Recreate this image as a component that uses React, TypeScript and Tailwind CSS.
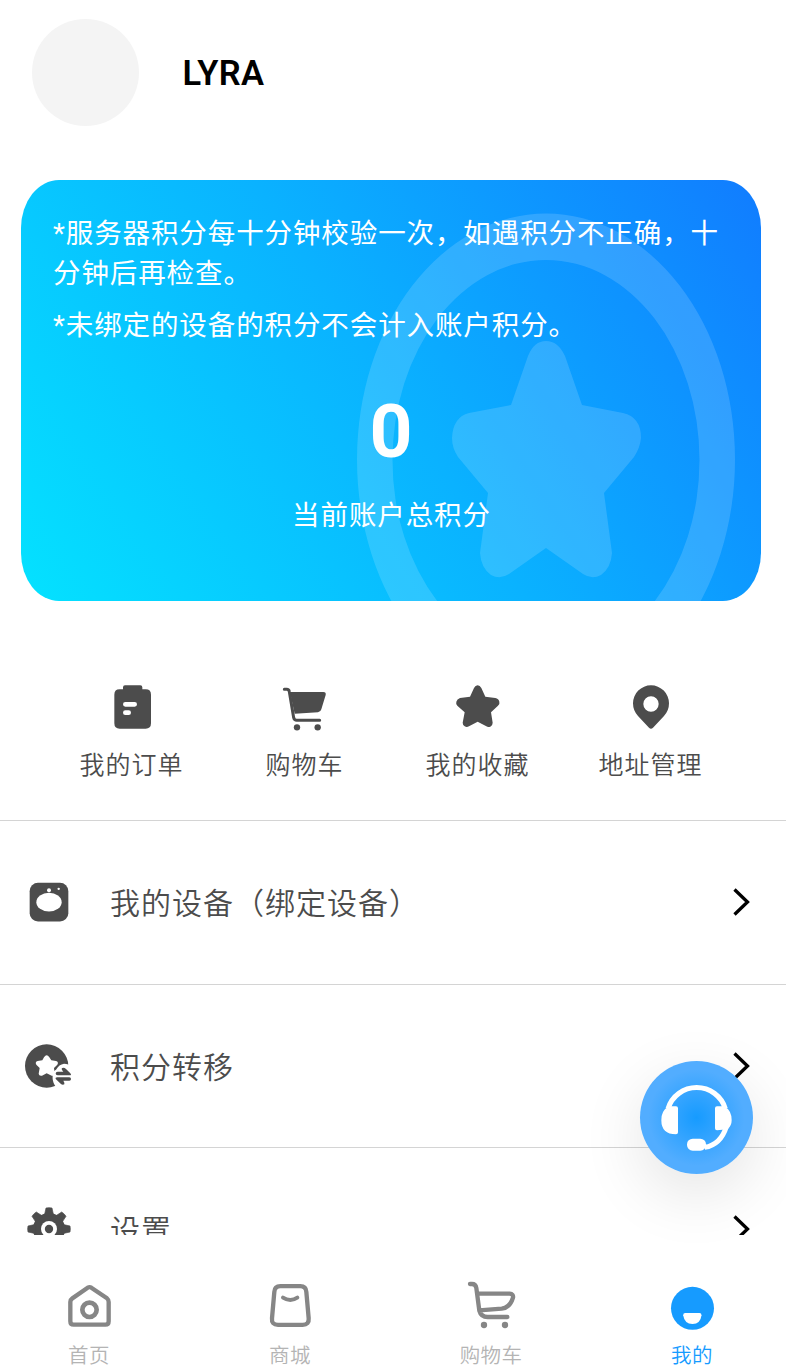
import type { ReactNode } from 'react';
import clsx from 'clsx';

type IconProps = { box: string; className?: string; children: ReactNode };

function Icon({ box, className, children }: IconProps) {
    return (
        <svg viewBox={box} className={clsx("shrink-0", className)} fill="currentColor" strokeLinecap="round" strokeLinejoin="round">
            {children}
        </svg>
    );
}

const shortcuts = [
    {
        label: '我的订单',
        box: '147 42 135 141',
        icon: (
            <>
                <path d="M189 58V52q0-6 6-6h46q6 0 6 6v6h10q16 0 16 16v86q0 16-16 16h-78q-16 0-16-16V74q0-16 16-16z" />
                <path d="M196 103h28M196 128h10" stroke="#fff" strokeWidth="14" />
            </>
        ),
    },
    {
        label: '购物车',
        box: '666 42 135 141',
        icon: (
            <>
                <path d="M690 66h100q9 0 7 9l-13 43q-2 8-10 9l-70 4z" />
                <path d="M673 58h7q7 0 8 7l13 78q2 8 9 8h69" fill="none" stroke="currentColor" strokeWidth="9" />
                <circle cx="711" cy="172" r="9.5" />
                <circle cx="773" cy="172" r="9.5" />
            </>
        ),
    },
    {
        label: '我的收藏',
        box: '165 42 135 141',
        icon: <path d="M222 54Q226 46 233 46T244 54L256 80 286 84Q296 86 298 95T294 107L273 127 278 158Q278 167 271 170T259 169L233 155 207 169Q200 173 194 169T188 158L194 127 172 107Q167 102 169 95T180 84L210 80Z" />,
    },
    {
        label: '地址管理',
        box: '684 42 135 141',
        icon: <path fillRule="evenodd" d="M753 46a54 54 0 0 1 54 54q0 22-15 38l-33 35q-6 6-12 0l-33-35q-15-16-15-38a54 54 0 0 1 54-54zM753 79a23 23 0 1 0 0 46a23 23 0 1 0 0-46z" />,
    },
];

const rows = [
    {
        label: '我的设备（绑定设备）',
        box: '42 55.5 144 144',
        icon: (
            <>
                <rect x="59" y="70" width="116" height="116" rx="25" />
                <g fill="#fff">
                    <ellipse cx="117" cy="128" rx="38" ry="28" />
                    <circle cx="117" cy="92" r="6" />
                    <circle cx="146" cy="88" r="3.5" />
                </g>
            </>
        ),
    },
    {
        label: '积分转移',
        box: '42 36 144 144',
        icon: (
            <>
                <circle cx="110" cy="108" r="65" />
                <path fill="#fff" d="M102 82Q110 70 118 82L124 91 138 93Q147 96 142 104L132 114 134 131Q133 139 125 137L110 130 96 137Q87 139 86 131L89 114 79 104Q74 96 83 93L97 91Z" />
                <path fill="#fff" d="M128 140Q125 126 138 119Q147 103 162 101Q179 101 190 116V174H140Q126 157 128 140Z" />
                <path d="M143 125h17l-4-5q-3-7 4-7 4 0 8 4l13 13q5 6-2 6h-36q-6 0-6-5.500t6-5.500zM142 142h36q5 0 5 5t-5 5h-18l3 6q2 6-4 6-4 0-7-3l-14-13q-4-6 4-6z" />
            </>
        ),
    },
    {
        label: '设置',
        box: '42 525 144 144',
        icon: (
            <>
                <circle cx="117" cy="597" r="48" />
                {[0, 45, 90, 135, 180, 225, 270, 315].map(angle => (
                    <path key={angle} d="M103 557L108 534Q117 532 126 534L131 557Z" stroke="currentColor" strokeWidth="2" transform={`rotate(${angle} 117 597)`} />
                ))}
                <circle cx="117" cy="597" r="24" fill="#fff" />
                <circle cx="117" cy="597" r="12.5" />
            </>
        ),
    },
];

const tabs = [
    {
        label: '首页',
        box: '75 48 147 147',
        icon: (
            <g fill="none" stroke="currentColor" strokeWidth="13">
                <path d="M91 111Q91 104 97 100L143 68Q149 65 154 68L201 100Q206 104 206 111V169Q206 179 196 179H101Q91 179 91 169Z" />
                <circle cx="148.500" cy="134.500" r="21.500" strokeWidth="14" />
            </g>
        ),
    },
    {
        label: '商城',
        box: '677 48 147 147',
        icon: (
            <g fill="none" stroke="currentColor" strokeWidth="13">
                <path d="M720 63.500h60q17 0 18 17l7 79q2 20-18 20h-74q-20 0-18-20l7-79q1-17 18-17z" />
                <path d="M728 98q22 14 43 0" strokeWidth="12" />
            </g>
        ),
    },
    {
        label: '购物车',
        box: '81 48 147 147',
        icon: (
            <>
                <path d="M90 57h6q11 0 13 12l9 68q5 19 25 19h59M112 86h97q12 1 10 12-9 30-34 33l-67 5" fill="none" stroke="currentColor" strokeWidth="13" />
                <circle cx="132" cy="180" r="9.500" />
                <circle cx="195" cy="180" r="9.500" />
            </>
        ),
    },
    {
        label: '我的',
        box: '684.500 48 147 147',
        active: true,
        icon: (
            <>
                <circle cx="758" cy="130" r="64.500" />
                <path fill="#fff" d="M736 144h43q6 0 6 7-3 26-27 26t-28-26q0-7 6-7z" />
            </>
        ),
    },
];

function PointsCard() {
    return (
        <section className="relative ml-[21px] mt-[54px] h-[421px] w-[740px] overflow-hidden rounded-[38px/48px] bg-[linear-gradient(57deg,#04e2ff_0%,#0ab2ff_50%,#117cff_100%)] text-white">
            <svg viewBox="21 180 740 421" className="absolute inset-0 h-full w-full" fill="#fff" fillOpacity="0.150">
                <path fillRule="evenodd" d="M546 213.500a189 246 0 1 0 0 492a189 246 0 1 0 0-492zM546 260a153.500 200 0 1 1 0 400a153.500 200 0 1 1 0-400z" />
                <path d="M528 356Q534 341 546 341T565 356L582 405 623 413Q641 417 641 438 640 448 634 457L604 493 612 553Q611 568 601 575 592 580 583 574L546 548 509 574Q500 580 491 575 481 568 480 553L488 493 458 457Q452 448 452 438 453 417 469 413L511 405Z" />
            </svg>
            <div className="relative flex flex-col gap-3 pl-8 pr-7 pt-[34px] text-[27.500px] leading-10 tracking-[0.900px]">
                <p>*服务器积分每十分钟校验一次，如遇积分不正确，十分钟后再检查。</p>
                <p>*未绑定的设备的积分不会计入账户积分。</p>
            </div>
            <div className="relative flex flex-col items-center">
                <strong className="mt-[45px] font-['Roboto'] text-[75px] font-bold leading-[80px]">0</strong>
                <span className="ml-px mt-[25px] text-[27.500px] leading-10 tracking-[0.900px]">当前账户总积分</span>
            </div>
        </section>
    );
}

export default function App() {
    return (
        <div className="relative flex h-[1365px] w-[786px] flex-col overflow-hidden bg-white font-['Roboto','Noto_Sans_CJK_SC',sans-serif] text-[#4c4c4c]">
            <main className="h-[1235px] shrink-0 overflow-hidden">
                <header className="flex items-center gap-[43.500px] pl-8 pt-[19px]">
                    <div className="size-[107px] rounded-full bg-[#f4f4f4]" />
                    <h1 className="text-[34.500px] font-semibold leading-10 tracking-[0.400px] text-black">LYRA</h1>
                </header>

                <PointsCard />

                <nav className="ml-[45px] mt-[83px] grid h-[136px] w-[692px] grid-cols-4">
                    {shortcuts.map(item => (
                        <a key={item.label} className="flex flex-col items-center">
                            <Icon box={item.box} className="h-[47px] w-[45px]">{item.icon}</Icon>
                            <span className="mt-[15px] text-[25px] font-[350] leading-10 tracking-[1px]">{item.label}</span>
                        </a>
                    ))}
                </nav>

                <ul>
                    {rows.map(row => (
                        <li key={row.label} className="flex h-[163.500px] items-center border-t border-[#d4d4d4] pl-6 pr-[36px]">
                            <Icon box={row.box} className="size-12">{row.icon}</Icon>
                            <span className="ml-[38px] mt-1 flex-1 text-[30px] font-[350] leading-10 tracking-[1px]">{row.label}</span>
                            <svg viewBox="0 0 17 28" className="h-7 w-[17px] text-black" fill="none" stroke="currentColor" strokeWidth="3.3">
                                <path d="M1.500 1.500L14.500 14L1.500 26.500" />
                            </svg>
                        </li>
                    ))}
                </ul>
            </main>

            <footer className="flex justify-between pl-[46px] pr-[51px] pt-[46px]">
                {tabs.map(tab => (
                    <a key={tab.label} className={clsx("flex w-[86px] flex-col items-center", tab.active ? "text-[#169bff]" : "text-[#868686]")}>
                        <Icon box={tab.box} className="size-[49px]">{tab.icon}</Icon>
                        <span className={clsx("mt-[14px] whitespace-nowrap text-[20.500px] font-[350] leading-[24px] tracking-[0.400px]", !tab.active && "text-[#b4b4b4]")}>{tab.label}</span>
                    </a>
                ))}
            </footer>

            {/* Customer service */}
            <button className="absolute left-[640px] top-[1060.500px] size-[113px] rounded-full bg-[radial-gradient(circle_closest-side,#169bff_0%,#52adff_85%)] shadow-[0_20px_64px_rgba(0,0,0,0.110)]">
                <svg viewBox="90 91 339 339" className="h-full w-full" fill="#fff">
                    <path d="M174 234A90 90 0 0 1 346 234M349 288Q332 342 284 350" fill="none" stroke="#fff" strokeWidth="15" />
                    <path d="M178 227h20q6 0 6 6v72q0 6-6 6-44 0-44-42 0-31 24-42zM341 227h-20q-6 0-6 6v60q0 6 6 6l32-3q12-11 12-27 0-31-24-42z" />
                    <rect x="231" y="324" width="57" height="36" rx="17" />
                </svg>
            </button>
        </div>
    );
}
